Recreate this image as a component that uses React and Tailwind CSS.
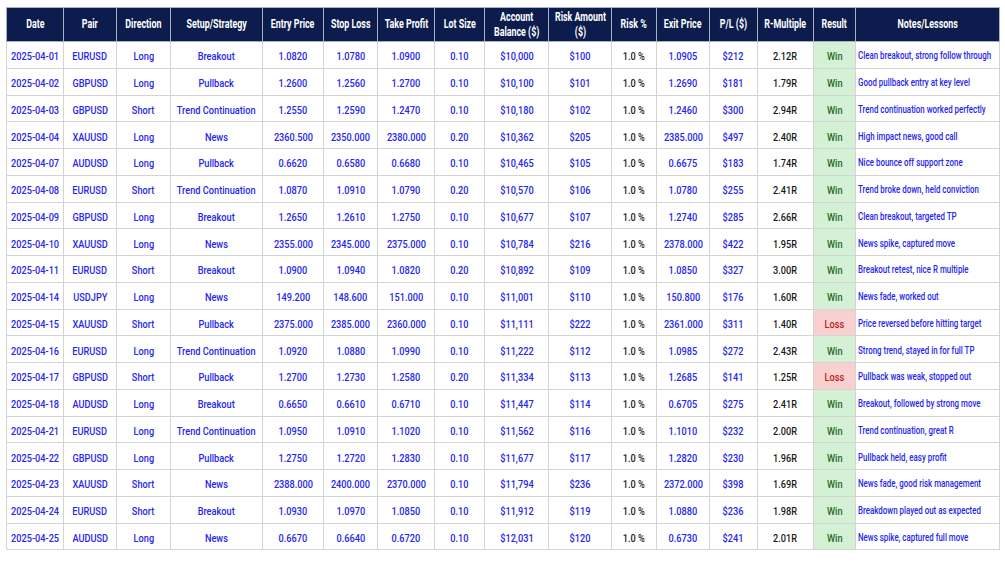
const COLUMNS = [
  { label: ["Date"], width: "w-[57px]" },
  { label: ["Pair"], width: "w-[53px]" },
  { label: ["Direction"], width: "w-[54px]" },
  { label: ["Setup/Strategy"], width: "w-[92px]" },
  { label: ["Entry Price"], width: "w-[61px]" },
  { label: ["Stop Loss"], width: "w-[54px]" },
  { label: ["Take Profit"], width: "w-[57px]" },
  { label: ["Lot Size"], width: "w-[50px]" },
  { label: ["Account", "Balance ($)"], width: "w-[64px]" },
  { label: ["Risk Amount", "($)"], width: "w-[63px]" },
  { label: ["Risk %"], width: "w-[45px]" },
  { label: ["Exit Price"], width: "w-[53px]" },
  { label: ["P/L ($)"], width: "w-[48px]" },
  { label: ["R-Multiple"], width: "w-[56px]" },
  { label: ["Result"], width: "w-[42px]" },
  { label: ["Notes/Lessons"], width: "w-[144px]" }
];

const TRADES = [
  ["2025-04-01", "EURUSD", "Long", "Breakout", "1.0820", "1.0780", "1.0900", "0.10", "$10,000", "$100", "1.0905", "$212", "2.12R", "Win", "Clean breakout, strong follow through"],
  ["2025-04-02", "GBPUSD", "Long", "Pullback", "1.2600", "1.2560", "1.2700", "0.10", "$10,100", "$101", "1.2690", "$181", "1.79R", "Win", "Good pullback entry at key level"],
  ["2025-04-03", "GBPUSD", "Short", "Trend Continuation", "1.2550", "1.2590", "1.2470", "0.10", "$10,180", "$102", "1.2460", "$300", "2.94R", "Win", "Trend continuation worked perfectly"],
  ["2025-04-04", "XAUUSD", "Long", "News", "2360.500", "2350.000", "2380.000", "0.20", "$10,362", "$205", "2385.000", "$497", "2.40R", "Win", "High impact news, good call"],
  ["2025-04-07", "AUDUSD", "Long", "Pullback", "0.6620", "0.6580", "0.6680", "0.10", "$10,465", "$105", "0.6675", "$183", "1.74R", "Win", "Nice bounce off support zone"],
  ["2025-04-08", "EURUSD", "Short", "Trend Continuation", "1.0870", "1.0910", "1.0790", "0.20", "$10,570", "$106", "1.0780", "$255", "2.41R", "Win", "Trend broke down, held conviction"],
  ["2025-04-09", "GBPUSD", "Long", "Breakout", "1.2650", "1.2610", "1.2750", "0.10", "$10,677", "$107", "1.2740", "$285", "2.66R", "Win", "Clean breakout, targeted TP"],
  ["2025-04-10", "XAUUSD", "Long", "News", "2355.000", "2345.000", "2375.000", "0.10", "$10,784", "$216", "2378.000", "$422", "1.95R", "Win", "News spike, captured move"],
  ["2025-04-11", "EURUSD", "Short", "Breakout", "1.0900", "1.0940", "1.0820", "0.20", "$10,892", "$109", "1.0850", "$327", "3.00R", "Win", "Breakout retest, nice R multiple"],
  ["2025-04-14", "USDJPY", "Long", "News", "149.200", "148.600", "151.000", "0.10", "$11,001", "$110", "150.800", "$176", "1.60R", "Win", "News fade, worked out"],
  ["2025-04-15", "XAUUSD", "Short", "Pullback", "2375.000", "2385.000", "2360.000", "0.10", "$11,111", "$222", "2361.000", "$311", "1.40R", "Loss", "Price reversed before hitting target"],
  ["2025-04-16", "EURUSD", "Long", "Trend Continuation", "1.0920", "1.0880", "1.0990", "0.10", "$11,222", "$112", "1.0985", "$272", "2.43R", "Win", "Strong trend, stayed in for full TP"],
  ["2025-04-17", "GBPUSD", "Short", "Pullback", "1.2700", "1.2730", "1.2580", "0.20", "$11,334", "$113", "1.2685", "$141", "1.25R", "Loss", "Pullback was weak, stopped out"],
  ["2025-04-18", "AUDUSD", "Long", "Breakout", "0.6650", "0.6610", "0.6710", "0.10", "$11,447", "$114", "0.6705", "$275", "2.41R", "Win", "Breakout, followed by strong move"],
  ["2025-04-21", "EURUSD", "Long", "Trend Continuation", "1.0950", "1.0910", "1.1020", "0.10", "$11,562", "$116", "1.1010", "$232", "2.00R", "Win", "Trend continuation, great R"],
  ["2025-04-22", "GBPUSD", "Long", "Pullback", "1.2750", "1.2720", "1.2830", "0.10", "$11,677", "$117", "1.2820", "$230", "1.96R", "Win", "Pullback held, easy profit"],
  ["2025-04-23", "XAUUSD", "Short", "News", "2388.000", "2400.000", "2370.000", "0.10", "$11,794", "$236", "2372.000", "$398", "1.69R", "Win", "News fade, good risk management"],
  ["2025-04-24", "EURUSD", "Short", "Breakout", "1.0930", "1.0970", "1.0850", "0.10", "$11,912", "$119", "1.0880", "$236", "1.98R", "Win", "Breakdown played out as expected"],
  ["2025-04-25", "AUDUSD", "Long", "News", "0.6670", "0.6640", "0.6720", "0.10", "$12,031", "$120", "0.6730", "$241", "2.01R", "Win", "News spike, captured full move"]
];

const cell = "border border-[#d4d4d4] p-0";

// The sheet uses a narrow font we don't have, so squeeze the text horizontally.
function Fit({ children }) {
  return (
    <div className="flex justify-center pt-[3px]">
      <span className="origin-center scale-x-[0.8] whitespace-nowrap">{children}</span>
    </div>
  );
}

function TradeRow({ trade }) {
  const [date, pair, direction, setup, entry, stop, take, lot, balance, risk, exit, pl, rMultiple, result, notes] = trade;
  const blue = [date, pair, direction, setup, entry, stop, take, lot, balance, risk];
  const isWin = result === "Win";

  return (
    <tr className="h-[26.75px]">
      {blue.map((value, index) => (
        <td className={`${cell} text-[#2626ee]`} key={index}>
          <Fit>{value}</Fit>
        </td>
      ))}
      <td className={`${cell} text-[#1a1a1a]`}>
        <Fit>1.0 %</Fit>
      </td>
      <td className={`${cell} text-[#2626ee]`}>
        <Fit>{exit}</Fit>
      </td>
      <td className={`${cell} text-[#2626ee]`}>
        <Fit>{pl}</Fit>
      </td>
      <td className={`${cell} text-[#1a1a1a]`}>
        <Fit>{rMultiple}</Fit>
      </td>
      <td className={isWin ? `${cell} bg-[#d5f1d5] text-[#1d6a1d]` : `${cell} bg-[#f8d0d0] text-[#c41a1a]`}>
        <Fit>{result}</Fit>
      </td>
      <td className={`${cell} text-[#2626ee]`}>
        <div className="flex justify-start pl-[2px] pt-[3px]">
          <span className="origin-left scale-x-[0.72] whitespace-nowrap text-[11px]">{notes}</span>
        </div>
      </td>
    </tr>
  );
}

export default function App() {
  return (
    <div className="min-h-[566px] bg-white pl-[6px] pt-[7px] font-['Roboto','Liberation_Sans',sans-serif] text-[11.5px] leading-[14px] font-medium">
      <table className="w-[993px] table-fixed border-collapse">
        <colgroup>
          {COLUMNS.map((column) => (
            <col className={column.width} key={column.label.join(" ")} />
          ))}
        </colgroup>
        <thead>
          <tr className="h-[34px] bg-[#0c1c4c] text-white">
            {COLUMNS.map((column) => (
              <th className="border border-[#a9b0c2] p-0 text-[12px] font-bold" key={column.label.join(" ")}>
                <div className="flex justify-center">
                  <span className="origin-center scale-x-[0.74] whitespace-nowrap text-center leading-[15px]">
                    {column.label.map((line) => (
                      <span className="block" key={line}>
                        {line}
                      </span>
                    ))}
                  </span>
                </div>
              </th>
            ))}
          </tr>
        </thead>
        <tbody>
          {TRADES.map((trade) => (
            <TradeRow key={trade[0]} trade={trade} />
          ))}
        </tbody>
      </table>
    </div>
  );
}
